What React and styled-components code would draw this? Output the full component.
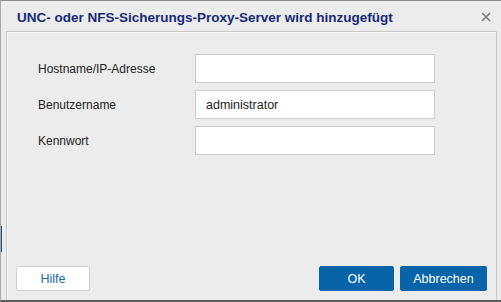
import React from "react";
import styled, { createGlobalStyle } from "styled-components";

const Global = createGlobalStyle`
  * { box-sizing: border-box; }
  html, body { margin: 0; padding: 0; background: #ececec; }
  body { font-family: "Liberation Sans", Arial, sans-serif; }
`;

const Dialog = styled.div`
  width: 501px;
  height: 302px;
  background: #ececec;
  border-top: 1px solid #8c8c8c;
  border-bottom: 2px solid #5a5a5a;
  border-left: 1px solid #a8a8a8;
  display: flex;
  flex-direction: column;
  position: relative;
  overflow: hidden;
`;

const EdgeMark = styled.div`
  position: absolute;
  left: 0;
  top: 225px;
  width: 1px;
  height: 26px;
  background: #1d4f7a;
`;

const TitleBar = styled.div`
  height: 30px;
  display: flex;
  align-items: center;
  justify-content: space-between;
  padding: 0 9px 0 16px;
`;

const Title = styled.h1`
  margin: 0;
  font-size: 13.5px;
  font-weight: bold;
  color: #16297a;
  letter-spacing: 0;
  padding-top: 2px;
`;

const CloseButton = styled.button`
  border: 0;
  background: none;
  padding: 0;
  width: 12px;
  height: 12px;
  display: flex;
  align-items: center;
  justify-content: center;
  cursor: pointer;
  margin-top: 2px;
`;

const Panel = styled.div`
  flex: 1;
  margin: 0 4px 0 5px;
  border: 1px solid #c6c6c6;
  border-bottom: 0;
  box-shadow: inset 1px 1px 0 #f7f7f7;
  display: flex;
  flex-direction: column;
  padding: 22px 9px 9px 9px;
`;

const Form = styled.div`
  display: grid;
  grid-template-columns: 157px 240px;
  row-gap: 7px;
  padding-left: 22px;
  align-items: center;
`;

const Label = styled.label`
  font-size: 12px;
  color: #222;
`;

const Input = styled.input`
  height: 29px;
  border: 1px solid #cbcbcb;
  background: #fff;
  padding: 0 10px;
  font-family: "Liberation Sans", Arial, sans-serif;
  font-size: 12.5px;
  color: #222;
  outline: none;
`;

const Footer = styled.div`
  margin-top: auto;
  display: flex;
  align-items: center;
  gap: 6px;
`;

const Spacer = styled.div`
  flex: 1;
`;

const Button = styled.button`
  height: 25px;
  width: ${(p) => p.$w}px;
  border-radius: 2px;
  font-family: "Liberation Sans", Arial, sans-serif;
  font-size: 12.5px;
  cursor: pointer;
  border: 1px solid ${(p) => (p.$primary ? "#0764a9" : "#cfcfcf")};
  background: ${(p) => (p.$primary ? "#0764a9" : "#fff")};
  color: ${(p) => (p.$primary ? "#fff" : "#1a6cb0")};
`;

export default function App() {
  return (
    <>
      <Global />
      <Dialog>
        <EdgeMark />
        <TitleBar>
          <Title>UNC- oder NFS-Sicherungs-Proxy-Server wird hinzugefügt</Title>
          <CloseButton aria-label="Schließen">
            <svg width="10" height="10" viewBox="0 0 10 10">
              <path d="M1 1 L9 9 M9 1 L1 9" stroke="#7a7a7a" strokeWidth="1.6" />
            </svg>
          </CloseButton>
        </TitleBar>
        <Panel>
          <Form>
            <Label>Hostname/IP-Adresse</Label>
            <Input defaultValue="" />
            <Label>Benutzername</Label>
            <Input defaultValue="administrator" />
            <Label>Kennwort</Label>
            <Input type="password" defaultValue="" />
          </Form>
          <Footer>
            <Button $w={74}>Hilfe</Button>
            <Spacer />
            <Button $primary $w={75}>OK</Button>
            <Button $primary $w={87}>Abbrechen</Button>
          </Footer>
        </Panel>
      </Dialog>
    </>
  );
}
